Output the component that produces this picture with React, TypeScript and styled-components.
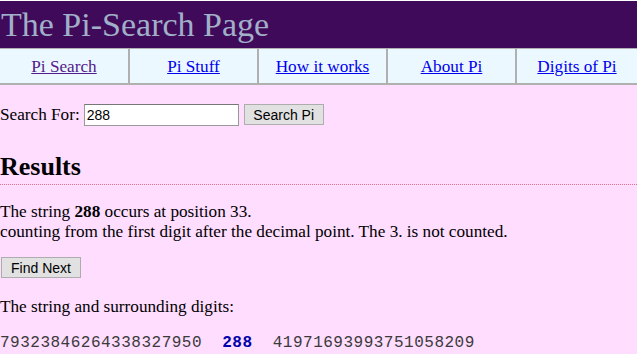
import { createGlobalStyle } from 'styled-components'
import styled from 'styled-components'

const GlobalStyle = createGlobalStyle`
	html {
		background: #ffffff;
	}
	body {
		margin: 0;
		padding-top: 1px;
		background: #ffffff;
		font-family: 'Liberation Serif', 'Times New Roman', serif;
		font-size: 17.2px;
		color: #000000;
	}
`

const Page = styled.div`
	background: #ffddff;
	min-height: 353px;
`

const Header = styled.header`
	background: #400a5a;
	height: 47px;
	display: flex;
	align-items: center;
	padding-left: 1px;
`

const Title = styled.h1`
	margin: 0;
	font-family: 'Liberation Serif', 'Times New Roman', serif;
	font-weight: 400;
	font-size: 34px;
	color: #a0b0c8;
	line-height: 1;
`

const Nav = styled.nav`
	display: grid;
	grid-template-columns: 128px repeat(3, 129px) 1fr;
	background: #ecf8ff;
	border-top: 1px solid #b0b0b0;
	border-bottom: 2px solid #b0b0b0;
	height: 34px;
`

const NavCell = styled.div<{ $first?: boolean }>`
	display: flex;
	align-items: center;
	justify-content: center;
	padding-top: 2px;
	border-left: ${(p) => (p.$first ? 'none' : '2px solid #b0b0b0')};
`

const NavLink = styled.a<{ $visited?: boolean }>`
	color: ${(p) => (p.$visited ? '#551a8b' : '#0000ee')};
	text-decoration: underline;
`

const Content = styled.main`
	padding: 19px 0 0 0;
`

const SearchRow = styled.form`
	display: flex;
	align-items: center;
	margin: 0;
	height: 21px;
`

const Label = styled.label`
	margin-right: 4px;
`

const SearchInput = styled.input`
	width: 155px;
	height: 22px;
	box-sizing: border-box;
	border: 1px solid #999999;
	border-top-color: #777777;
	padding: 1px 2px;
	font-family: 'Liberation Sans', Arial, sans-serif;
	font-size: 14px;
	background: #ffffff;
	outline: none;
`

const Button = styled.button`
	height: 21px;
	box-sizing: border-box;
	background: #e1e1e1;
	border: 1px solid #adadad;
	font-family: 'Liberation Sans', Arial, sans-serif;
	font-size: 14px;
	color: #000000;
	padding: 0 8px;
	margin: 0;
	cursor: pointer;
`

const SearchButton = styled(Button)`
	margin-left: 5px;
	width: 80px;
`

const FindButton = styled(Button)`
	width: 80px;
	margin-left: 1px;
`

const Heading = styled.h2`
	margin: 30px 0 17px 0;
	font-family: 'Liberation Serif', 'Times New Roman', serif;
	font-size: 26px;
	font-weight: 700;
	line-height: 24px;
	padding-bottom: 5px;
	border-bottom: 1px dotted #e07090;
`

const Para = styled.p<{ $gap?: number }>`
	margin: ${(p) => p.$gap ?? 0}px 0 15px 0;
	line-height: 20px;
`

const Digits = styled.pre`
	margin: 17px 0 0 0;
	font-family: 'Liberation Mono', 'Courier New', monospace;
	font-size: 16px;
	letter-spacing: 0.5px;
	color: #3a3a3a;
	line-height: 18px;
`

const Match = styled.b`
	color: #0000aa;
`

const links = ['Pi Search', 'Pi Stuff', 'How it works', 'About Pi', 'Digits of Pi']

export default function App() {
	return (
		<Page>
			<GlobalStyle />
			<Header>
				<Title>The Pi-Search Page</Title>
			</Header>
			<Nav>
				{links.map((x, i) => (
					<NavCell key={x} $first={i === 0}>
						<NavLink href="#" $visited={i === 0}>
							{x}
						</NavLink>
					</NavCell>
				))}
			</Nav>
			<Content>
				<SearchRow onSubmit={(e) => e.preventDefault()}>
					<Label>Search For:</Label>
					<SearchInput type="text" defaultValue="288" />
					<SearchButton type="submit">Search Pi</SearchButton>
				</SearchRow>
				<Heading>Results</Heading>
				<Para>
					The string <b>288</b> occurs at position 33.
					<br />
					counting from the first digit after the decimal point. The 3. is not counted.
				</Para>
				<FindButton type="button">Find Next</FindButton>
				<Para $gap={19}>The string and surrounding digits:</Para>
				<Digits>
					79323846264338327950  <Match>288</Match>  41971693993751058209
				</Digits>
			</Content>
		</Page>
	)
}
